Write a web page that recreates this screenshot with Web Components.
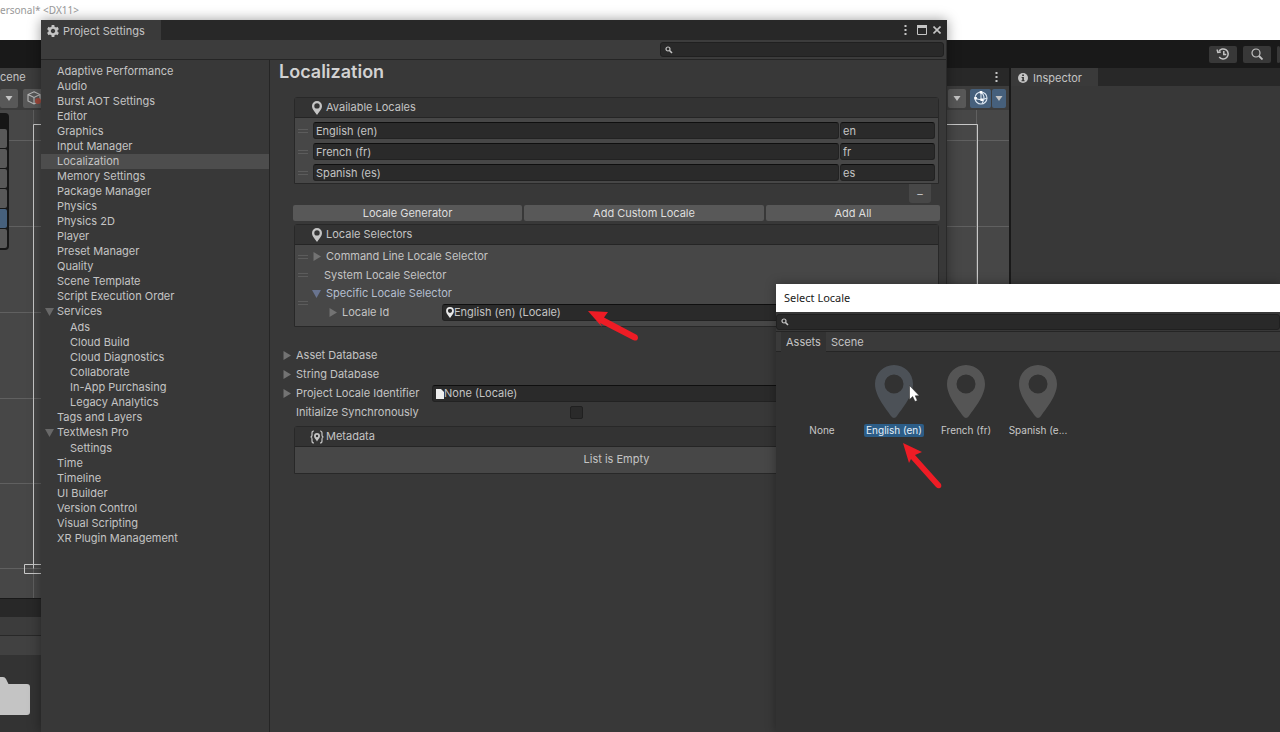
<!DOCTYPE html>
<html lang="en">
<head>
<meta charset="utf-8">
<title>Project Settings</title>
<style>
  html, body { height: 100%; margin: 0; }
  body { background: #191919; color: #c4c4c4; font: 11px/15px Inter, "Liberation Sans", sans-serif; overflow: hidden; }
</style>
</head>
<body>
<unity-desktop></unity-desktop>

<script>
const BASE = `*{box-sizing:border-box} button,input{font:inherit;color:inherit;margin:0} a{color:inherit;text-decoration:none}`;

function define(name, css, html) {
  customElements.define(name, class extends HTMLElement {
    constructor() {
      super();
      const root = this.attachShadow({ mode: "open" });
      const view = typeof html === "function" ? html(this) : html;
      root.innerHTML = `<style>${BASE}${css}</style>${view}`;
    }
  });
}

const PIN = `<path fill="currentColor" fill-rule="evenodd" d="M19 0C8.500 0 0 8.500 0 19C0 32 13 46 16 51Q19 55 22 51C25 46 38 32 38 19C38 8.500 29.500 0 19 0ZM19 9.500A9.500 9.500 0 1 1 19 28.500A9.500 9.500 0 1 1 19 9.500Z"/>`;
const PIN_SMALL = `<path fill="currentColor" fill-rule="evenodd" d="M5 0A5 5 0 0 0 0 5C0 8.500 3.200 11 4.200 13Q5 14.500 5.800 13C6.800 11 10 8.500 10 5A5 5 0 0 0 5 0ZM5 2.200A2.700 2.700 0 1 1 5 7.600A2.700 2.700 0 1 1 5 2.200Z"/>`;
const ICONS = {
  gear: ["0 0 12 12", 12, 12, `<path fill="none" stroke="currentColor" stroke-width="2.400" d="M6 2.600A3.400 3.400 0 1 1 6 9.400A3.400 3.400 0 1 1 6 2.600Z"/><path stroke="currentColor" stroke-width="2.800" d="M6 0v2.500M6 9.500V12M.8 3l2.200 1.300M9 7.700L11.200 9M.8 9L3 7.700M9 4.300L11.200 3"/>`],
  pin: ["0 0 10 14", 10, 14, PIN_SMALL],
  bigpin: ["0 0 38 54", 38, 54, PIN],
  smallpin: ["0 0 10 14", 8, 11, PIN_SMALL],
  doc: ["0 0 8 10", 8, 10, `<path fill="#eee" d="M0 0h5l3 3v7H0z"/>`],
  meta: ["0 0 14 14", 14, 14, `<path fill="none" stroke="currentColor" stroke-width="1.200" d="M4 1Q2 1 2 3V5Q2 7 .5 7Q2 7 2 9V11Q2 13 4 13M10 1Q12 1 12 3V5Q12 7 13.500 7Q12 7 12 9V11Q12 13 10 13"/><path fill="currentColor" fill-rule="evenodd" d="M7 3a3 3 0 0 0-3 3c0 2 2 3.500 3 5.500 1-2 3-3.500 3-5.500a3 3 0 0 0-3-3zm0 1.800a1.200 1.200 0 1 1 0 2.400 1.200 1.200 0 1 1 0-2.400z"/>`],
  right: ["0 0 8 9", 8, 9, `<path fill="currentColor" d="M.5 0L8 4.500L.5 9z"/>`],
  down: ["0 0 9 8", 9, 8, `<path fill="currentColor" d="M0 0H9L4.500 8z"/>`],
  caret: ["0 0 8 5", 8, 5, `<path fill="currentColor" d="M.5 0H7.500L4 5z"/>`],
  grip: ["0 0 10 4", 10, 4, `<path stroke="#5c5c5c" d="M0 .5H10M0 3.500H10"/>`],
  search: ["0 0 8 8", 8, 8, `<circle cx="3" cy="3" r="2" fill="none" stroke="currentColor" stroke-width="1.200"/><path stroke="currentColor" stroke-width="1.600" d="M4.500 4.500L7 7"/>`],
  lens: ["0 0 12 12", 12, 12, `<circle cx="5" cy="5" r="4" fill="none" stroke="currentColor" stroke-width="1.200"/><path stroke="currentColor" stroke-width="1.800" d="M8 8l3.500 3.500"/>`],
  history: ["0 0 14 12", 14, 12, `<path fill="none" stroke="currentColor" stroke-width="1.500" d="M2.800 3.500A5 5 0 1 1 3.200 9M7.800 3v3.500h2.500"/><path fill="none" stroke="currentColor" stroke-width="1.300" d="M1 1.500l.8 3 3-.5"/>`],
  dots: ["0 0 3 10", 3, 10, `<path fill="currentColor" d="M.5 0h2v2h-2zM.5 4h2v2h-2zM.5 8h2v2h-2z"/>`],
  maximize: ["0 0 10 10", 10, 10, `<path fill="none" stroke="currentColor" d="M.5 .5h9v9h-9z"/><path fill="currentColor" d="M0 0h10v3H0z"/>`],
  close: ["0 0 8 8", 8, 8, `<path stroke="currentColor" stroke-width="1.600" d="M.5 .5l7 7M7.500 .5l-7 7"/>`],
  info: ["0 0 10 10", 10, 10, `<circle cx="5" cy="5" r="5" fill="currentColor"/><path fill="#333" d="M4.200 1.500h1.700v1.600H4.200zM3.600 4h2.300v3.300h.7v1H3.500v-1h.8V5h-.7z"/>`],
  gizmo: ["0 0 14 14", 14, 14, `<g fill="none" stroke="#d9e4f0" stroke-width="1.100"><circle cx="7" cy="7" r="6"/><path d="M7 1V8.500M7 1.200Q12.500 5 8 12.800M1 7Q7 10.500 13 7"/></g><path fill="#fff" d="M5.700 0h2.600v2.600H5.700zM.3 6h2.600v2.600H.3zM6.500 7.500h2.600v2.600H6.500z"/>`],
  cube: ["0 0 14 14", 14, 14, `<path fill="none" stroke="#bbb" stroke-width="1.100" d="M7 .8L13 3.500V10L7 13L1 10V3.500zM1 3.500L7 6.500L13 3.500M7 6.500V13"/><circle cx="11" cy="10" r="3" fill="#a0493c"/>`],
  folder: ["0 0 30 38", 30, 38, `<path fill="#c4c4c4" d="M0 0H3Q5 0 6 2L8.500 7H27Q30 7 30 10V35Q30 38 27 38H0z"/>`],
  cursor: ["0 0 11 17", 11, 17, `<path fill="#fff" stroke="#222" stroke-width=".5" d="M.5 .5V14.500L3.700 11.600L6 16.500L8.300 15.500L6.200 10.800H10.300z"/>`],
  arrowA: ["0 0 50 30", 50, 30, `<path fill="#ee1c25" d="M0 0L20 1L16 6.500L49 24Q51 27 49 29Q48 30 45 29L12 12L14 16z"/>`],
  arrowB: ["0 0 40 46", 40, 46, `<path fill="#ee1c25" d="M0 0L19 9L12 12L38 41Q39 44 37 45Q35 46 33 44L8 16L6 20z"/>`],
};

customElements.define("ui-icon", class extends HTMLElement {
  constructor() { super(); this.attachShadow({ mode: "open" }); }
  connectedCallback() {
    const [box, w, h, art] = ICONS[this.getAttribute("name")];
    this.shadowRoot.innerHTML = `<style>:host{display:inline-flex;flex:none}svg{display:block}</style><svg viewBox="${box}" width="${w}" height="${h}" aria-hidden="true">${art}</svg>`;
  }
});

/* Window tab with an icon */
define("window-tab", `
  :host{display:flex;align-items:center;gap:4px;height:100%;padding:2px 16px 0 6px;background:#3a3a3a}
  .ic{display:flex;justify-content:center;width:12px}
`, el => `<span class="ic"><ui-icon name="${el.getAttribute("icon")}"></ui-icon></span><slot></slot>`);

/* Search box */
define("search-box", `
  :host{display:block}
  label{display:flex;align-items:center;gap:4px;height:100%;padding:0 4px;background:#292929;border:1px solid #202020;border-radius:3px}
  input{flex:1;min-width:0;height:100%;padding:0;background:none;border:0;outline:0}
`, `<label><ui-icon name="search"></ui-icon><input type="text" aria-label="Search"></label>`);

/* Settings categories */
const link = t => `<li><a href="#"${t === "Localization" ? ' class="on" aria-current="page"' : ""}>${t}</a></li>`;
const group = (t, kids) => `<li><a href="#" class="group"><ui-icon name="down"></ui-icon>${t}</a><ul>${kids.map(link).join("")}</ul></li>`;
define("settings-nav", `
  :host{display:block;flex:none;width:229px;padding-top:4px;border-right:1px solid #252525}
  ul{list-style:none;margin:0;padding:0}
  a{display:flex;align-items:center;height:15px;padding-left:16px;white-space:nowrap}
  ul ul{padding-top:1px}
  ul ul a{padding-left:29px}
  .on{background:#4d4d4d}
  .group{padding-left:4px;gap:3px}
  ui-icon{color:#686868}
`, `<nav aria-label="Settings"><ul>
  ${["Adaptive Performance","Audio","Burst AOT Settings","Editor","Graphics","Input Manager","Localization","Memory Settings","Package Manager","Physics","Physics 2D","Player","Preset Manager","Quality","Scene Template","Script Execution Order"].map(link).join("")}
  ${group("Services", ["Ads","Cloud Build","Cloud Diagnostics","Collaborate","In-App Purchasing","Legacy Analytics"])}
  ${link("Tags and Layers")}
  ${group("TextMesh Pro", ["Settings"])}
  ${["Time","Timeline","UI Builder","Version Control","Visual Scripting","XR Plugin Management"].map(link).join("")}
</ul></nav>`);

/* Titled list */
define("list-panel", `
  :host{display:block;margin:0 7px 0 24px;border:1px solid #282828;border-radius:3px 3px 0 0;background:#474747}
  header{display:flex;align-items:center;gap:4px;height:20px;padding-left:17px;background:#333;border-bottom:1px solid #252525}
  .ic{display:flex;justify-content:center;width:10px}
`, el => `<header><span class="ic"><ui-icon name="${el.getAttribute("icon")}"></ui-icon></span>${el.getAttribute("heading")}</header><slot></slot>`);

/* Name and code of one locale */
define("locale-row", `
  :host{display:flex;align-items:center;gap:1px;height:17px;margin-bottom:4px}
  ui-icon{width:17px;padding-left:3px}
  input{height:17px;min-width:0;padding:0 2px;background:#2a2a2a;border:1px solid #222;border-top-color:#0f0f0f;border-radius:3px;outline:0}
  .name{flex:1}
  .code{width:95px}
`, el => `<ui-icon name="grip"></ui-icon><input class="name" aria-label="Locale name" value="${el.getAttribute("name")}"><input class="code" aria-label="Locale code" value="${el.getAttribute("code")}">`);

/* Expandable line */
define("foldout-row", `
  :host{display:flex;align-items:center;height:19px}
  button{display:flex;align-items:center;gap:5px;width:var(--label,auto);height:19px;padding:0;background:none;border:0;white-space:nowrap}
  .ic{display:flex;justify-content:center;width:9px;color:#737373}
  :host([open]) .ic{color:#69748f}
`, el => `<button aria-expanded="${el.hasAttribute("open")}"><span class="ic"><ui-icon name="${el.hasAttribute("open") ? "down" : "right"}"></ui-icon></span><slot></slot></button><slot name="field"></slot>`);

/* Asset reference */
define("object-field", `
  :host{display:flex;flex:1}
  button{display:flex;align-items:center;flex:1;height:17px;padding:0 3px;background:#2a2a2a;border:1px solid #222;border-top-color:#0f0f0f;border-radius:3px;white-space:nowrap}
  ui-icon{color:#e8e8e8}
`, el => `<button><ui-icon name="${el.getAttribute("icon")}"></ui-icon><slot></slot></button>`);

/* Right-hand page */
define("localization-page", `
  :host{display:block;flex:1;min-width:0}
  h1{margin:0 0 13px 9px;font-size:18px;line-height:24px;font-weight:600;color:#d2d2d2}
  .locales{padding:4px 3px 0 0;display:flow-root}
  .locales locale-row:last-child{margin-bottom:2px}
  .foot{display:flex;justify-content:flex-end;height:21px;padding-right:15px}
  .foot button{width:22px;height:19px;padding:0;background:#474747;border:0;border-radius:0 0 3px 3px;line-height:18px}
  .actions{display:flex;gap:2px;margin:0 6px 3px 23px}
  .actions button{height:16px;padding:0;background:#585858;border:0;border-radius:2px;line-height:16px;color:#dedede}
  .gen{width:229px}.custom{flex:1}.all{width:174px}
  .selectors{padding:2px 0 4px}
  .item{display:flex;align-items:center}
  .item>ui-icon{width:17px;padding-left:3px}
  .item>div{flex:1}
  .plain{display:flex;align-items:center;height:18px;padding-left:12px}
  .sub{padding-left:16px;--label:114px}
  .rows{padding:19px 7px 4px 12px}
  .rows foldout-row{--label:150px}
  .check{display:flex;align-items:center;height:19px;padding-left:14px}
  .check label{width:274px}
  .check input{appearance:none;width:13px;height:13px;background:#2a2a2a;border:1px solid #202020;border-radius:2px}
  .empty{height:26px;line-height:25px;text-align:center}
  foldout-row[open]{color:#b5bfd0}
`, `
<h1>Localization</h1>
<list-panel icon="pin" heading="Available Locales"><div class="locales">
  <locale-row name="English (en)" code="en"></locale-row>
  <locale-row name="French (fr)" code="fr"></locale-row>
  <locale-row name="Spanish (es)" code="es"></locale-row>
</div></list-panel>
<div class="foot"><button aria-label="Remove locale">–</button></div>
<div class="actions"><button class="gen">Locale Generator</button><button class="custom">Add Custom Locale</button><button class="all">Add All</button></div>
<list-panel icon="pin" heading="Locale Selectors"><div class="selectors">
  <div class="item"><ui-icon name="grip"></ui-icon><div><foldout-row>Command Line Locale Selector</foldout-row></div></div>
  <div class="item"><ui-icon name="grip"></ui-icon><div class="plain">System Locale Selector</div></div>
  <div class="item"><ui-icon name="grip"></ui-icon><div>
    <foldout-row open>Specific Locale Selector</foldout-row>
    <foldout-row class="sub">Locale Id<object-field slot="field" icon="smallpin">English (en) (Locale)</object-field></foldout-row>
  </div></div>
</div></list-panel>
<div class="rows">
  <foldout-row>Asset Database</foldout-row>
  <foldout-row>String Database</foldout-row>
  <foldout-row>Project Locale Identifier<object-field slot="field" icon="doc">None (Locale)</object-field></foldout-row>
  <div class="check"><label for="sync">Initialize Synchronously</label><input type="checkbox" id="sync"></div>
</div>
<list-panel icon="meta" heading="Metadata"><div class="empty">List is Empty</div></list-panel>
`);

/* Floating Project Settings window */
define("settings-window", `
  :host{display:flex;flex-direction:column;background:#383838;border-right:1px solid #2a2a2a;box-shadow:0 0 12px rgba(0,0,0,.4)}
  .title{display:flex;align-items:center;height:20px;background:#282828}
  .ctl{display:flex;align-items:center;gap:6px;margin-left:auto;padding-right:5px}
  .ctl button{display:flex;padding:0;background:none;border:0}
  .ctl .menu{padding-right:4px}
  .bar{display:flex;justify-content:flex-end;height:20px;padding:2px;background:#3c3c3c;border-bottom:1px solid #252525}
  search-box{width:284px;height:15px}
  .body{display:flex;flex:1}
`, `<div class="title"><window-tab icon="gear">Project Settings</window-tab><div class="ctl"><button class="menu" aria-label="Menu"><ui-icon name="dots"></ui-icon></button><button aria-label="Maximize"><ui-icon name="maximize"></ui-icon></button><button aria-label="Close"><ui-icon name="close"></ui-icon></button></div></div>
<div class="bar"><search-box></search-box></div>
<div class="body"><settings-nav></settings-nav><localization-page></localization-page></div>`);

/* One asset in the picker */
define("asset-tile", `
  :host{display:block;width:72px}
  button{display:flex;flex-direction:column;align-items:center;gap:5px;width:72px;padding:0;background:none;border:0;font-size:10px;line-height:13px;color:#c8c8c8}
  .art{display:flex;width:38px;height:54px;color:#555}
  .name{padding:0 2px;border-radius:2px;white-space:nowrap}
  :host([selected]) .name{background:#2c5d87;color:#e8f0f8}
  :host([selected]) .art{color:#4c5157}
`, el => `<button><span class="art">${el.hasAttribute("empty") ? "" : '<ui-icon name="bigpin"></ui-icon>'}</span><span class="name"><slot></slot></span></button>`);

/* Object picker */
define("select-window", `
  :host{display:flex;flex-direction:column;background:#323232;box-shadow:0 0 10px rgba(0,0,0,.35)}
  header{height:28px;padding-left:8px;background:#fff;color:#1a1a1a;font:11px/28px "Noto Sans",sans-serif}
  .find{padding:2px 0 1px;background:#383838}
  search-box{height:16px}
  .tabs{display:flex;height:21px;padding-left:5px;background:#3a3a3a;border-top:1px solid #252525;border-bottom:1px solid #252525}
  .tabs button{height:20px;padding:0 5px;background:none;border:0;line-height:20px}
  .tabs .on{background:#323232}
  .grid{display:flex;flex-wrap:wrap;padding:13px 10px}
`, `<header>Select Locale</header><div class="find"><search-box></search-box></div>
<div class="tabs" role="tablist"><button class="on" role="tab" aria-selected="true">Assets</button><button role="tab" aria-selected="false">Scene</button></div>
<div class="grid"><asset-tile empty>None</asset-tile><asset-tile selected>English (en)</asset-tile><asset-tile>French (fr)</asset-tile><asset-tile>Spanish (e...</asset-tile></div>`);

/* Main editor behind the windows */
define("editor-shell", `
  :host{display:flex;flex-direction:column;height:100%}
  .title{height:40px;background:#fff;color:#999;font:10px/20px "Noto Sans",sans-serif}
  .top{display:flex;justify-content:flex-end;align-items:center;gap:6px;height:28px;background:#191919}
  .top button{display:flex;justify-content:center;align-items:center;width:28px;height:17px;padding:0;background:#383838;border:0;border-radius:2px;color:#c4c4c4}
  .top .cut{width:3px}
  .work{display:flex;flex:1;min-height:0;gap:2px}
  .left{display:flex;flex-direction:column;flex:1;min-width:0}
  .strip{display:flex;align-items:center;flex:none;height:18px;background:#282828}
  .strip>span{height:18px;width:60px;padding-top:2px;background:#3c3c3c}
  .strip>ui-icon{margin-left:auto;padding-right:11px}
  .tools{display:flex;align-items:center;flex:none;height:24px;background:#3c3c3c;padding-right:3px}
  .tools button{display:flex;justify-content:center;align-items:center;height:19px;padding:0;background:#585858;border:0;border-radius:2px}
  .d{width:18px}.c{width:22px;margin-left:5px}
  .push{margin-left:auto}
  .blue{background:#46607c!important}
  .tools .g{width:21px;margin:0 1px 0 4px}.tools .h{width:14px}
  .view{position:relative;flex:1;background:#474747;min-height:0;overflow:hidden}
  .view>svg{display:block;width:100%;height:100%}
  .palette{position:absolute;left:0;top:3px;width:9px;height:137px;padding:16px 2px 2px 0;background:#161616;border-radius:0 4px 4px 0;display:flex;flex-direction:column;gap:1px}
  .palette i{flex:1;background:#585858;border-radius:0 2px 2px 0}
  .palette .on{background:#46607c}
  .project{flex:none;height:134px;background:#333;border-top:1px solid #191919}
  .project .a{height:18px;background:#282828}
  .project .b{height:19px;background:#3c3c3c;border-bottom:1px solid #282828}
  .project .e{height:19px;background:#414141}
  .project ui-icon{padding-top:22px}
  .inspector{flex:none;width:269px;background:#383838}
`, `<div class="title">ersonal* &lt;DX11&gt;</div>
<div class="top"><button aria-label="History"><ui-icon name="history"></ui-icon></button><button aria-label="Search"><ui-icon name="lens"></ui-icon></button><button class="cut" aria-label="Layers"></button></div>
<div class="work"><div class="left">
  <div class="strip"><span>cene</span><ui-icon name="dots"></ui-icon></div>
  <div class="tools"><button class="d" aria-label="Options"><ui-icon name="caret"></ui-icon></button><button class="c" aria-label="Shading"><ui-icon name="cube"></ui-icon></button>
  <button class="d push" aria-label="View"><ui-icon name="caret"></ui-icon></button><button class="blue g" aria-label="Gizmos"><ui-icon name="gizmo"></ui-icon></button><button class="blue h" aria-label="Gizmo options"><ui-icon name="caret"></ui-icon></button></div>
  <div class="view"><svg aria-hidden="true"><path stroke="#606060" fill="none" d="M0 30.500H1009M0 116.500H1009M0 202.500H1009M0 288.500H1009M0 373.500H1009M0 458.500H1009M33.500 0V500M976.500 0V500"/><path fill="none" stroke="#c8c8c8" d="M33.500 458.500V14.500H977.500V458.500M60 454.500H24.500V463.500H60"/></svg>
    <div class="palette"><i></i><i></i><i></i><i></i><i class="on"></i><i></i></div></div>
  <div class="project"><div class="a"></div><div class="b"></div><div class="e"></div><ui-icon name="folder"></ui-icon></div>
</div>
<div class="inspector"><div class="strip"><window-tab icon="info">Inspector</window-tab></div></div></div>`);

/* Windows and annotations on the desktop */
define("unity-desktop", `
  :host{display:block;position:relative;height:100vh;overflow:hidden}
  settings-window,select-window,.mark{position:absolute}
  settings-window{left:41px;top:20px;bottom:0;width:906px}
  select-window{left:776px;top:284px;right:0;bottom:0}
  .a{left:588px;top:311px}
  .b{left:903px;top:443px}
  .cursor{left:909px;top:385px}
`, `<editor-shell></editor-shell><settings-window></settings-window><select-window></select-window>
<ui-icon class="mark a" name="arrowA"></ui-icon><ui-icon class="mark b" name="arrowB"></ui-icon><ui-icon class="mark cursor" name="cursor"></ui-icon>`);
</script>
</body>
</html>
